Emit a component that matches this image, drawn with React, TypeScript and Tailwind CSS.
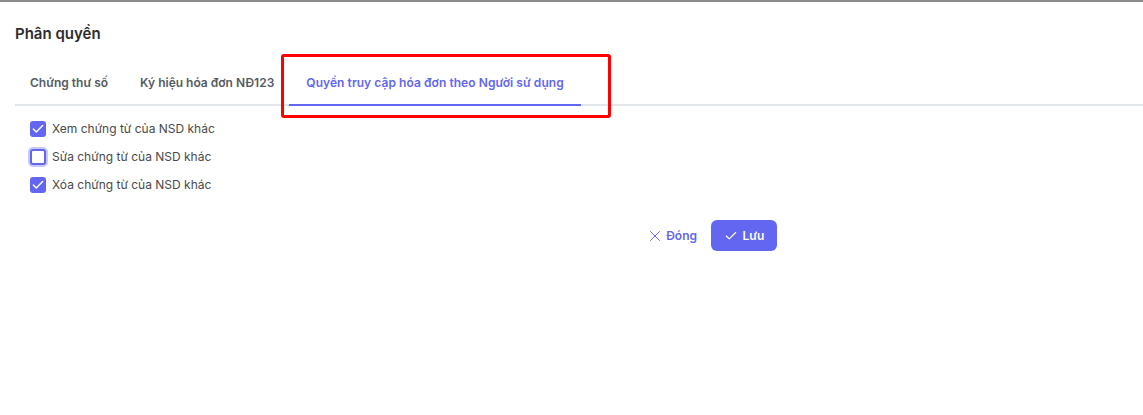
import { Check, X } from "lucide-react";

type Quyen = {
  nhan: string;
  chon: boolean;
  focus?: boolean;
};

const tabs = ["Chứng thư số", "Ký hiệu hóa đơn NĐ123", "Quyền truy cập hóa đơn theo Người sử dụng"];

const danhSachQuyen: Quyen[] = [
  { nhan: "Xem chứng từ của NSD khác", chon: true },
  { nhan: "Sửa chứng từ của NSD khác", chon: false, focus: true },
  { nhan: "Xóa chứng từ của NSD khác", chon: true },
];

function HopChon({ chon, focus }: { chon: boolean; focus?: boolean }) {
  if (chon) {
    return (
      <span className="flex h-4 w-4 items-center justify-center rounded-[3px] bg-[#6366f1]">
        <Check className="h-3.5 w-3.5 text-white" strokeWidth={2.5} />
      </span>
    );
  }
  return (
    <span
      className={`h-4 w-4 rounded-[3px] border-2 border-[#6366f1] bg-white ${focus ? "ring-2 ring-[#c7c8fb]" : ""}`}
    />
  );
}

export default function App() {
  const active = 2;

  return (
    <div className="relative h-[415px] w-[1143px] overflow-hidden bg-white font-['Inter',sans-serif]">
      <div className="h-[2px] w-full bg-[#8c8c8c]" />

      <h2 className="pl-[15px] pt-[22px] text-[15px] font-semibold leading-[20px] text-[#2d2d2d]">Phân quyền</h2>

      <div className="ml-[15px] mt-[17px] flex border-b-2 border-[#e2e5e9]">
        {tabs.map((tab, i) => (
          <div
            key={tab}
            className={`-mb-[2px] pb-[11px] pt-[12px] text-[12px] font-semibold leading-[20px] ${
              i === active
                ? "border-b-2 border-[#6366f1] pl-[17px] pr-[17px] tracking-[0.005em] text-[#6366f1]"
                : i === 0
                  ? "border-b-2 border-transparent pl-[15px] pr-[17px] text-[#555b63]"
                  : "border-b-2 border-transparent px-[15px] text-[#555b63]"
            }`}
          >
            {tab}
          </div>
        ))}
      </div>

      <div className="mt-[13px] flex flex-col gap-[8px] pl-[30px]">
        {danhSachQuyen.map((q) => (
          <label key={q.nhan} className="flex h-[20px] items-center gap-[6px]">
            <HopChon chon={q.chon} focus={q.focus} />
            <span className="text-[12px] leading-[20px] text-[#4a4a4a]">{q.nhan}</span>
          </label>
        ))}
      </div>

      <div className="mt-[25px] flex w-[777px] items-center justify-end gap-[14px]">
        <button className="flex items-center gap-[2px] text-[12px] font-semibold text-[#6366f1]">
          <X className="h-[18px] w-[18px]" strokeWidth={1.3} />
          Đóng
        </button>
        <button className="flex h-[31px] w-[66px] items-center justify-center gap-[5px] rounded-[6px] bg-[#6366f1] text-[12px] font-semibold text-white">
          <Check className="h-[14px] w-[14px]" strokeWidth={2} />
          Lưu
        </button>
      </div>

      <div className="pointer-events-none absolute left-[281px] top-[54px] h-[64px] w-[330px] rounded-[3px] border-[3px] border-[#ff0000]" />
    </div>
  );
}
